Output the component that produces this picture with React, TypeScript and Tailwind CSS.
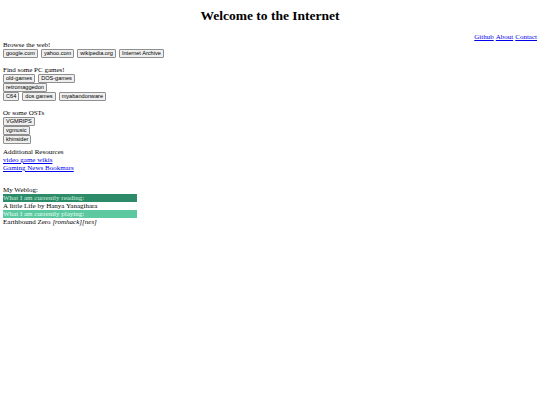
import React from "react"

const Btn = ({ children }: { children: React.ReactNode }) => (
  <button className="mr-[3px] rounded-[1px] border border-[#8f8f8f] bg-[#efefef] px-[2px] text-[5.6px] leading-[7px] text-black [font-family:'Liberation_Sans',Arial,sans-serif]">
    {children}
  </button>
)

const Row = ({ children }: { children: React.ReactNode }) => <div className="flex h-[9px] items-center">{children}</div>

export default function App() {
  return (
    <div className="min-h-[405px] bg-white px-[3px] text-[7px] leading-[8px] text-black [font-family:'Liberation_Serif','Times_New_Roman',serif]">
      <h1 className="pt-[8px] text-center text-[13.5px] font-bold leading-[16px]">Welcome to the Internet</h1>
      <div className="mt-[9px] flex justify-end gap-[2px] text-[#0000ee]">
        <a className="underline" href="#">Github</a>
        <a className="underline" href="#">About</a>
        <a className="underline" href="#">Contact</a>
      </div>

      <div>Browse the web!</div>
      <Row>
        <Btn>google.com</Btn>
        <Btn>yahoo.com</Btn>
        <Btn>wikipedia.org</Btn>
        <Btn>Internet Archive</Btn>
      </Row>

      <div className="mt-[8px]">Find some PC games!</div>
      <Row>
        <Btn>old-games</Btn>
        <Btn>DOS-games</Btn>
      </Row>
      <Row>
        <Btn>retromaggedon</Btn>
      </Row>
      <Row>
        <Btn>C64</Btn>
        <Btn>dos games</Btn>
        <Btn>myabandonware</Btn>
      </Row>

      <div className="mt-[8px]">Or some OSTs</div>
      <Row>
        <Btn>VGMRIPS</Btn>
      </Row>
      <Row>
        <Btn>vgmusic</Btn>
      </Row>
      <Row>
        <Btn>khinsider</Btn>
      </Row>

      <div className="mt-[4px]">Additional Resources</div>
      <a className="block text-[#0000ee] underline" href="#">video game wikis</a>
      <a className="block text-[#0000ee] underline" href="#">Gaming News Bookmars</a>

      <div className="mt-[14px]">My Weblog:</div>
      <div className="w-[134px] bg-[#2e8b6a] text-[#c9f0de]">What I am currently reading:</div>
      <div>A little Life by Hanya Yanagihara</div>
      <div className="w-[134px] bg-[#5cc9a0] text-[#e6fff4]">What I am currently playing:</div>
      <div>
        Earthbound Zero <i>[romhack][nes]</i>
      </div>
    </div>
  )
}
